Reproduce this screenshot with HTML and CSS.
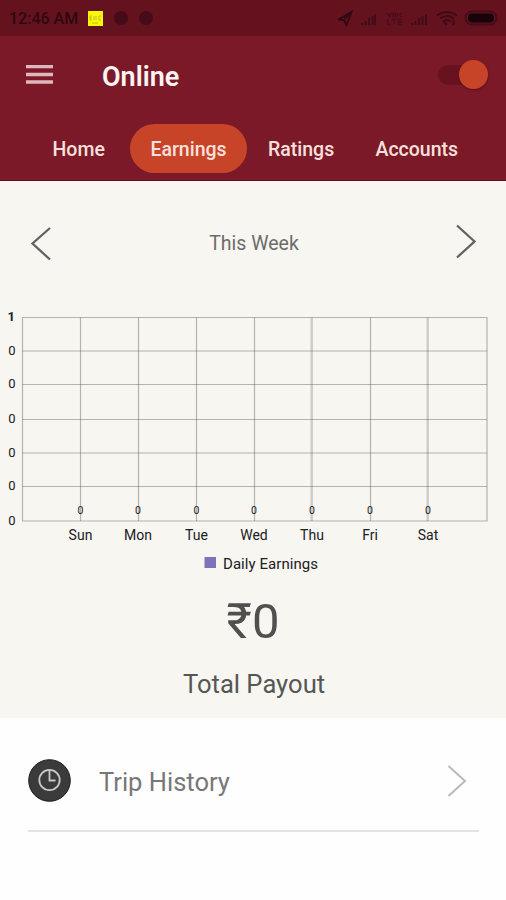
FILE: index.html
```html
<!DOCTYPE html>
<html lang="en">
<head>
<meta charset="utf-8">
<title>Earnings</title>
<link rel="stylesheet" href="styles.css">
</head>
<body>
<div class="status">
  <span class="clock">12:46 AM</span>
  <span class="note"><svg width="15" height="14" viewBox="0 0 15 14"><path d="M2 5v4M2 5h2M2 7h2M2 9h2M6 5v4M8 5v4M11 5h2M11 5v4h2M4 12h6" fill="none" stroke="#b5b51c" stroke-width=".8"/></svg></span>
  <span class="dot"></span>
  <span class="dot"></span>
  <svg class="tray" width="162" height="20" viewBox="338 8 162 20">
    <path d="M351.500 12 338.500 19.500 344 20 346.500 25Z M348.500 14.500 344.500 19" fill="none" stroke="#2f0812" stroke-width="1.800"/>
    <g fill="none" stroke="#420b18" stroke-width="2">
      <path d="M362 25v-2M365.500 25v-4M369 25v-7M372.500 25v-9M375 25v-11"/>
      <path d="M412 25v-2M415.500 25v-4M419 25v-7M422.500 25v-9M426 25v-11"/>
    </g>
    <g fill="none" stroke="#490d1a" stroke-width="1.300">
      <path d="M387.500 13l2 4 2-4M393 13.500h2.500v3H393zM397.500 17v-4M402 13l-2.500 2 2.500 2M387.500 19v5.500h3M391.500 19.500h5M394 19.500v5M402 19.500h-3.500v5h3.500M398.500 22h3"/>
    </g>
    <path d="M437 15.500q10-7 20 0M440 18.500q7-5 14 0M443 21.500q4-3 8 0M447 25l-3-3M453.500 20v5" fill="none" stroke="#3c0a16" stroke-width="1.800"/>
    <rect x="465.500" y="11.500" width="31" height="13" rx="6.500" fill="none" stroke="#450c19" stroke-width="1.800"/>
    <rect x="468" y="13.500" width="26" height="9" rx="4" fill="#17030a"/>
  </svg>
</div>
<header class="bar">
  <div class="title-row">
    <svg width="27" height="20" viewBox="0 0 27 20"><path d="M0 1.500h27M0 9.500h27M0 17h27" stroke="#dfb6bc" stroke-width="3.400"/></svg>
    <h1>Online</h1>
    <span class="switch"><span class="knob"></span></span>
  </div>
  <nav>
    <a class="home">Home</a>
    <a class="active">Earnings</a>
    <a class="ratings">Ratings</a>
    <a class="accounts">Accounts</a>
  </nav>
</header>
<main>
  <div class="week">
    <svg class="prev" width="22" height="36" viewBox="0 0 22 36"><path d="M20 2 2.500 17.500l17.500 16" fill="none" stroke="#626260" stroke-width="2.300"/></svg>
    <span>This Week</span>
    <svg class="next" width="22" height="36" viewBox="0 0 22 36"><path d="M2 1.500 19.500 17.500 2 33.500" fill="none" stroke="#626260" stroke-width="2.300"/></svg>
  </div>
  <svg class="chart" width="506" height="280" viewBox="0 300 506 280">
    <g fill="none" stroke="#3c4139" stroke-opacity=".36" stroke-width="1.200">
      <path d="M22.500 317.500H487V521H22.500z"/>
      <path d="M22.500 351H487M22.500 384.500H487M22.500 419.500H487M22.500 453H487M22.500 486.500H487"/>
      <path d="M80.500 317.500V521M138.500 317.500V521M196.500 317.500V521M254.500 317.500V521M370.500 317.500V521"/>
    </g>
    <path d="M311.700 317.500V521M427.700 317.500V521" stroke="#3c4139" stroke-opacity=".22" stroke-width="2.400"/>
    <g class="axis-y">
      <text class="top" x="15" y="321">1</text><text x="15.500" y="354.500">0</text><text x="15.500" y="388">0</text><text x="15.500" y="423">0</text><text x="15.500" y="456.500">0</text><text x="15.500" y="490">0</text><text x="15.500" y="525">0</text>
    </g>
    <g class="values">
      <text x="80.500" y="514">0</text><text x="138" y="514">0</text><text x="196.500" y="514">0</text><text x="254" y="514">0</text><text x="312" y="514">0</text><text x="370" y="514">0</text><text x="428" y="514">0</text>
    </g>
    <g class="axis-x">
      <text x="80.500" y="540">Sun</text><text x="138" y="540">Mon</text><text x="196.500" y="540">Tue</text><text x="254" y="540">Wed</text><text x="312" y="540">Thu</text><text x="370" y="540">Fri</text><text x="428" y="540">Sat</text>
    </g>
    <rect x="204.500" y="557" width="11.500" height="11" fill="#7d74b8"/>
    <text class="legend" x="223" y="568.500" textLength="95">Daily Earnings</text>
  </svg>
  <div class="amount">₹0</div>
  <div class="caption">Total Payout</div>
</main>
<section class="list">
  <div class="item">
    <svg width="43" height="43" viewBox="0 0 43 43"><circle cx="21.500" cy="21.500" r="20.800" fill="#3b3b3b" stroke="#1c1c1c" stroke-width="1"/><circle cx="21.500" cy="21" r="10.200" fill="none" stroke="#c9c9c9" stroke-width="1.800"/><path d="M21.500 11v10.500H27.500" fill="none" stroke="#c9c9c9" stroke-width="1.800"/></svg>
    <span>Trip History</span>
    <svg class="go" width="20" height="32" viewBox="0 0 20 32"><path d="M1.500 1 18 16 1.500 31" fill="none" stroke="#bababa" stroke-width="2"/></svg>
  </div>
</section>
</body>
</html>
```
FILE: styles.css
```css
* { box-sizing: border-box; }
body { margin: 0; width: 506px; height: 900px; overflow: hidden; background: #fefefe; font-family: Roboto, "Liberation Sans", sans-serif; }
svg { display: block; flex: none; }
.status { height: 36px; background: #65121f; display: flex; align-items: center; padding: 0 6px 0 9px; }
.clock { width: 79px; padding-top: 1px; font-size: 16px; font-weight: 500; color: #2e0711; white-space: nowrap; }
.note { width: 15px; height: 15px; background: #f8f60b; margin-right: 11px; }
.dot { width: 14px; height: 14px; border-radius: 50%; background: #460b18; margin-right: 11px; }
.tray { margin-left: auto; }
.bar { height: 145px; background: #7b1929; border-bottom: 1px solid #680b18; }
.title-row { height: 77px; display: flex; align-items: center; padding: 0 18px 0 26px; }
h1 { margin: 4px 0 0 49px; font-size: 27px; line-height: 32px; font-weight: 600; color: #fff4f2; }
.switch { margin-left: auto; width: 50px; height: 29px; display: flex; align-items: center; justify-content: flex-end; }
.switch::before { content: ""; width: 36px; height: 20px; border-radius: 10px; background: #68121f; margin-right: -14px; }
.knob { width: 29px; height: 29px; border-radius: 50%; background: #c74428; box-shadow: 0 1px 2px #5a101c; }
nav { display: flex; align-items: center; height: 49px; margin-top: 10.500px; font-size: 19.500px; font-weight: 500; color: #f8e0dc; }
nav a { white-space: nowrap; padding-top: 2px; }
.home { width: 77.500px; margin-left: 52.500px; }
nav .active { width: 117px; height: 49px; padding: 0; line-height: 51px; text-align: center; border-radius: 25px; background: #c74428; }
.ratings { width: 87px; margin-left: 21px; }
.accounts { margin-left: 20.500px; }
main { height: 537px; background: #f7f6f1; }
.week { height: 119px; display: flex; align-items: center; justify-content: space-between; padding: 5px 29px 0 30px; font-size: 19.500px; color: #6c6c6a; }
.week span { margin-left: 1px; }
.prev { margin-top: 2px; }
.next { margin-top: -2px; }
.chart text { font-size: 14px; fill: #20201e; text-anchor: middle; }
.chart .axis-y text { font-size: 13px; text-anchor: end; }
.chart .axis-y .top { font-weight: 700; }
.chart .values text { font-size: 10.500px; }
.chart .legend { font-size: 15px; text-anchor: start; }
.amount { height: 64px; margin-top: 10px; font-size: 49px; line-height: 64px; text-align: center; color: #50504e; }
.caption { margin-top: 12px; padding: 1px 0 0 2px; font-size: 25.600px; line-height: 34px; text-align: center; color: #565654; }
.list { padding: 0 27px 0 28px; }
.item { height: 114px; padding-top: 13px; display: flex; align-items: center; border-bottom: 2px solid #e4e4e4; font-size: 25.500px; color: #777; }
.item span { margin: 2px 0 0 28px; }
.go { margin: 0 12px 0 auto; }
```
